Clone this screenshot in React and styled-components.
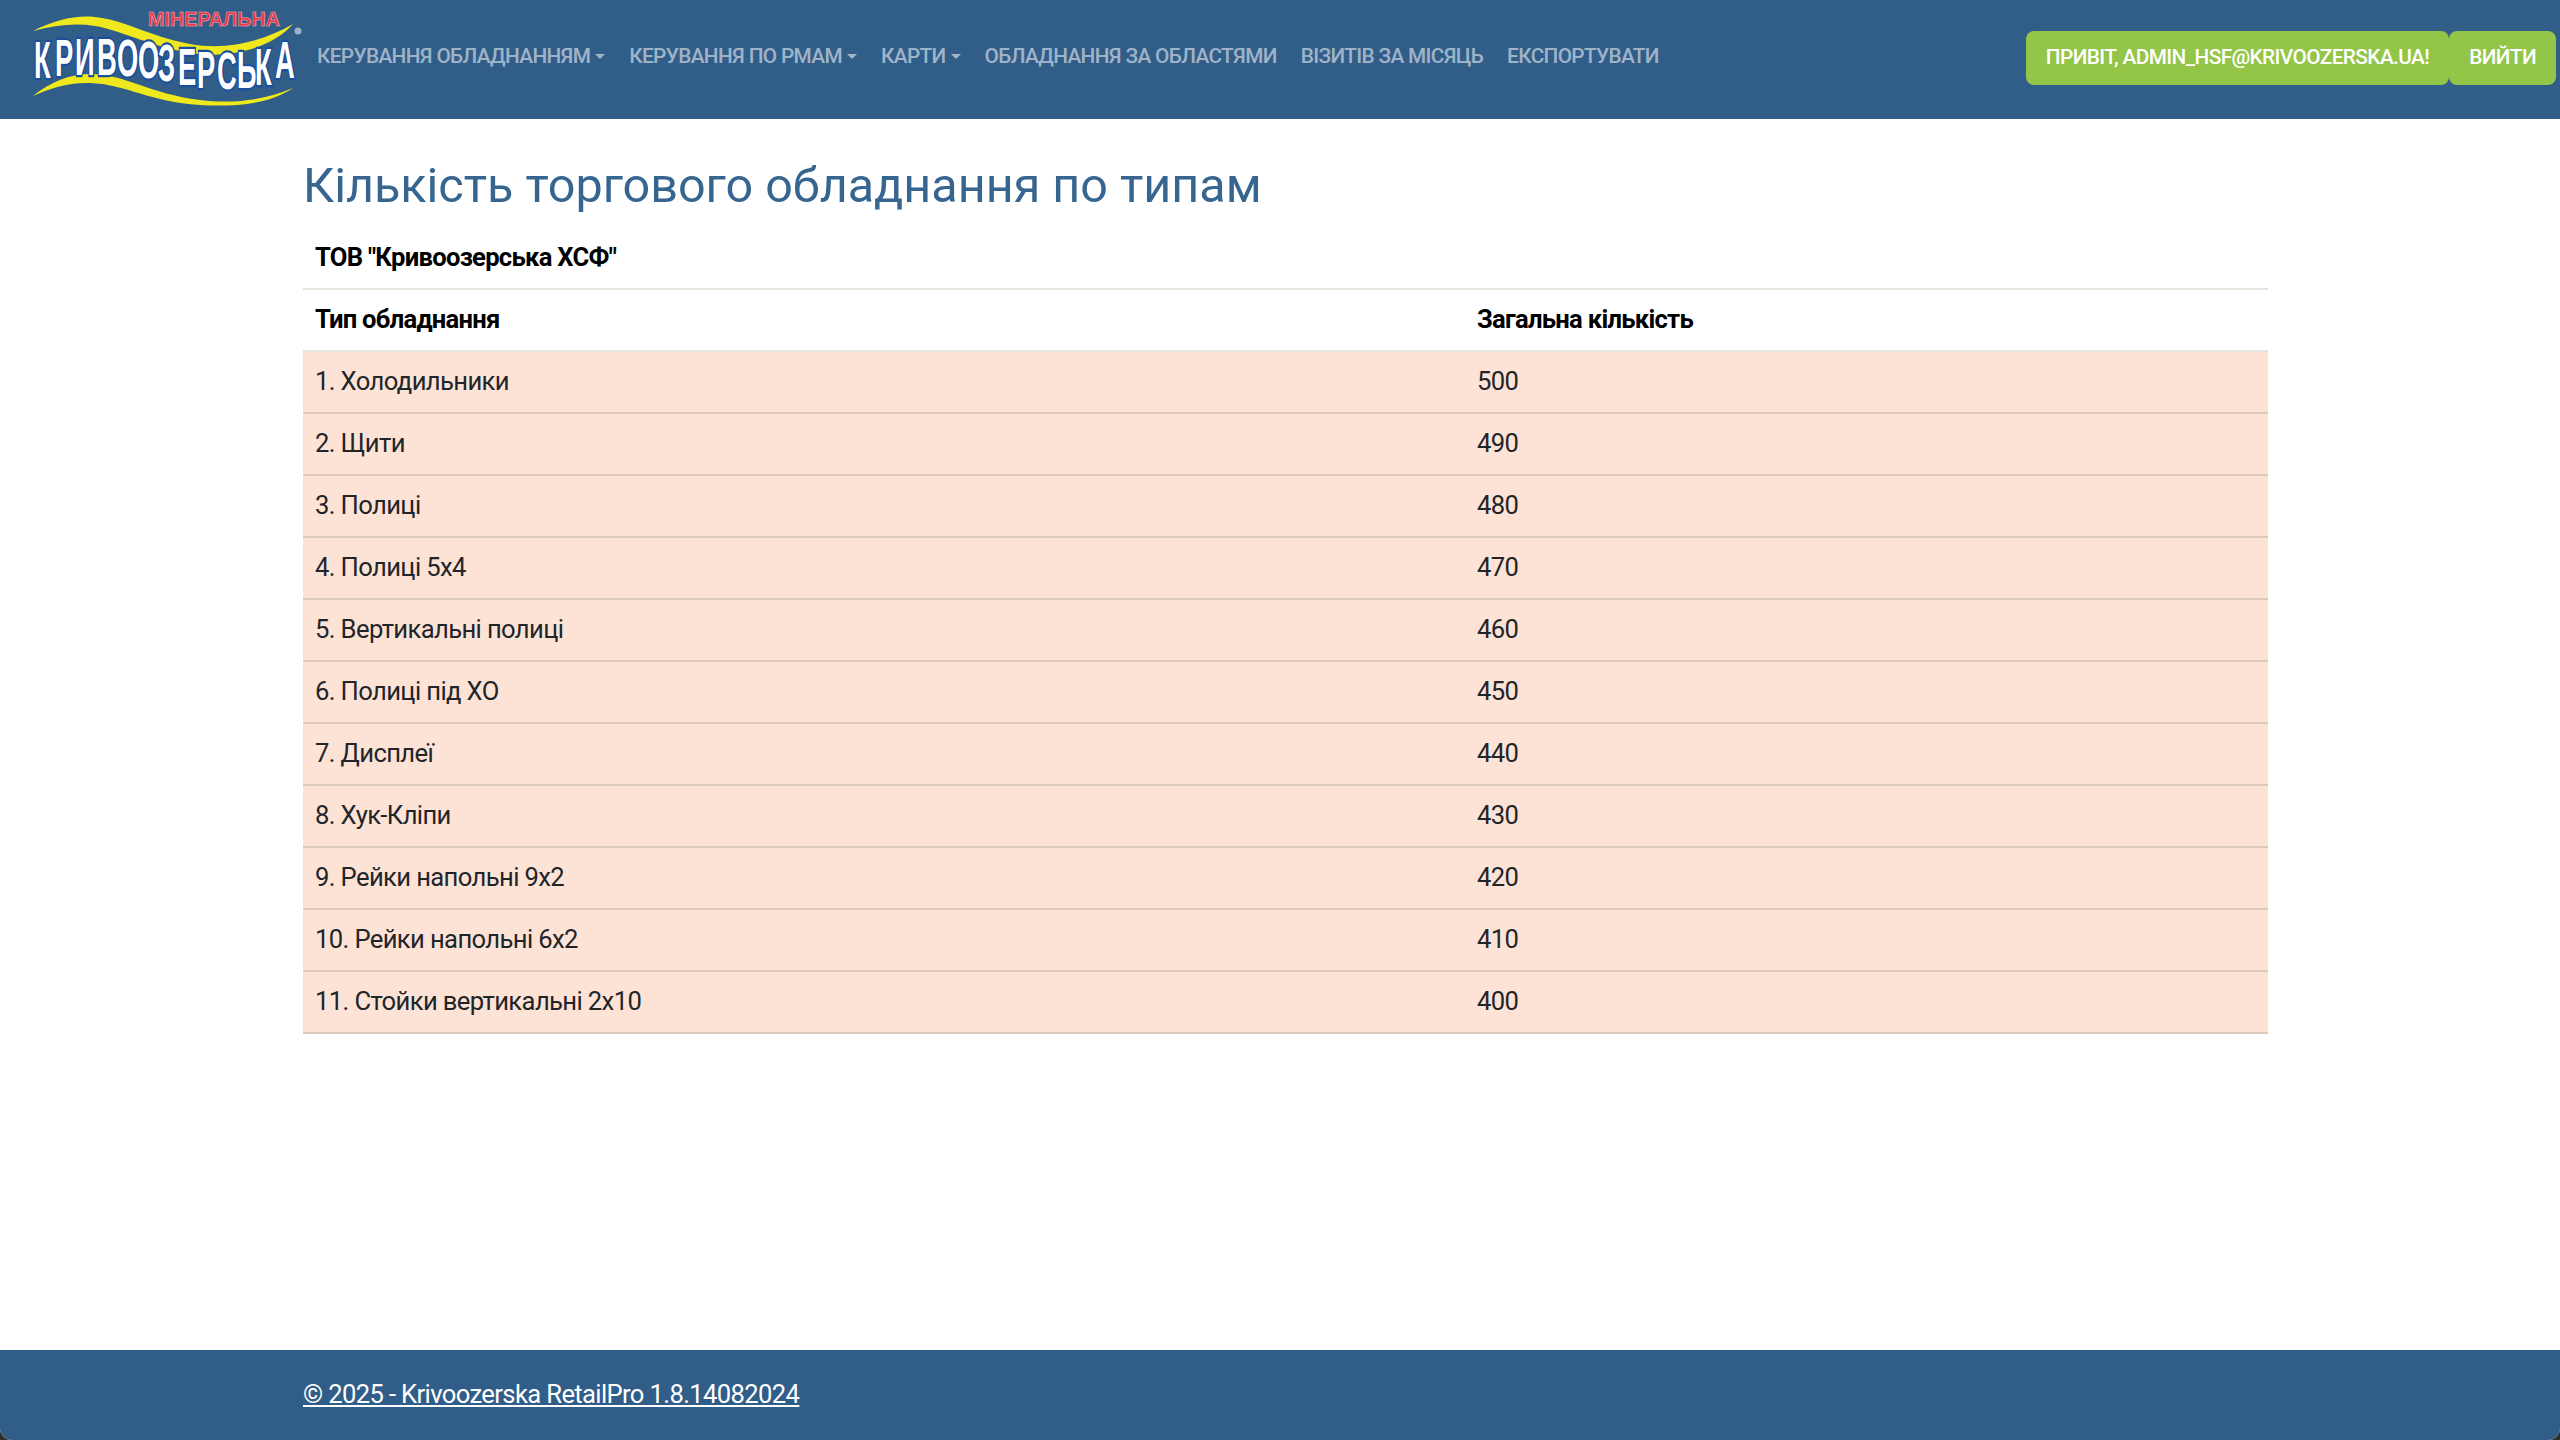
import React from "react";
import styled, { createGlobalStyle } from "styled-components";

const GlobalStyle = createGlobalStyle`
  html, body { margin: 0; padding: 0; background: #2f2f2f; }
  body {
    font-family: Roboto, "Liberation Sans", sans-serif;
    font-size: 25.6px;
    color: #212529;
  }
`;

const Page = styled.div`
  display: flex;
  flex-direction: column;
  height: 1440px;
  background: #fff;
  border-radius: 0 0 12px 12px;
  overflow: hidden;
`;

const NavBar = styled.nav`
  display: flex;
  align-items: center;
  height: 119px;
  flex: none;
  background: #315d89;
  padding-right: 4px;
`;

const LogoBox = styled.svg`
  display: block;
  flex: none;
  width: 305px;
  height: 119px;
`;

const NavList = styled.div`
  display: flex;
  flex: 1;
  align-items: center;
  margin-bottom: 7px;
`;

const NavLink = styled.a`
  display: flex;
  align-items: center;
  padding: 0 12px;
  font-size: 20.8px;
  font-weight: 500;
  letter-spacing: -0.65px;
  color: rgba(255, 255, 255, 0.55);
  white-space: nowrap;
`;

const Caret = styled.span`
  width: 0;
  height: 0;
  margin-left: 5px;
  border-top: 5px solid rgba(255, 255, 255, 0.55);
  border-left: 5px solid transparent;
  border-right: 5px solid transparent;
`;

const UserBox = styled.div`
  display: flex;
  margin-bottom: 3px;
`;

const GreenButton = styled.a`
  display: flex;
  align-items: center;
  height: 54px;
  padding: 0 20px 2px;
  box-sizing: border-box;
  background: #92c548;
  border-radius: 8px;
  font-size: 20.8px;
  font-weight: 500;
  letter-spacing: -0.6px;
  color: #fff;
  white-space: nowrap;
`;

const Main = styled.main`
  flex: 1;
  width: 1965px;
  margin-left: 303px;
  padding-top: 38px;
`;

const Title = styled.h2`
  margin: 0 0 12px;
  font-size: 48.5px;
  font-weight: 400;
  line-height: 58px;
  color: #366590;
`;

const Table = styled.table`
  width: 100%;
  border-collapse: collapse;
  table-layout: fixed;
`;

const HeadCell = styled.th`
  height: 62px;
  padding: 0 12px 2px;
  box-sizing: border-box;
  text-align: left;
  font-size: 25.6px;
  font-weight: 700;
  letter-spacing: -0.73px;
  color: #000;
  border-bottom: 2px solid #e7e3dd;
`;

const Row = styled.tr`
  background: #fde3d6;
`;

const Cell = styled.td`
  height: 62px;
  padding: 0 12px 2px;
  box-sizing: border-box;
  font-size: 25.6px;
  letter-spacing: -0.62px;
  color: #212529;
  border-bottom: 2px solid #dccabf;
`;

const FirstCol = styled.col`
  width: 1162px;
`;

const Footer = styled.footer`
  flex: none;
  height: 90px;
  display: flex;
  align-items: center;
  background: #315d89;
  padding-left: 303px;
  padding-bottom: 2px;
  box-sizing: border-box;
`;

const FooterLink = styled.a`
  font-size: 25.6px;
  letter-spacing: -0.63px;
  color: #fff;
  text-decoration: underline;
`;

const rows = [
  ["1. Холодильники", 500],
  ["2. Щити", 490],
  ["3. Полиці", 480],
  ["4. Полиці 5х4", 470],
  ["5. Вертикальні полиці", 460],
  ["6. Полиці під ХО", 450],
  ["7. Дисплеї", 440],
  ["8. Хук-Кліпи", 430],
  ["9. Рейки напольні 9х2", 420],
  ["10. Рейки напольні 6х2", 410],
  ["11. Стойки вертикальні 2х10", 400],
];

// letter, x, y of baseline
const logoLetters = [
  ["К", 34, 78], ["Р", 55, 76], ["И", 75, 75], ["В", 97, 75], ["О", 117, 76],
  ["О", 138, 78], ["З", 158, 81], ["Е", 178, 85], ["Р", 197, 88], ["С", 217, 89],
  ["Ь", 237, 88], ["К", 255, 85], ["А", 275, 78],
];

function Logo() {
  return (
    <LogoBox viewBox="0 0 305 119">
      <path d="M33 31 C55 20 75 15 95 17 C125 20 145 35 190 44 C230 51 265 40 293 24 C270 50 225 60 185 52 C145 44 120 30 95 26 C75 23 55 25 33 31Z" fill="#efe81c" />
      <path d="M33 96 C50 82 70 74 90 74 C125 74 150 94 200 100 C235 104 265 100 293 88 C270 104 235 107 200 105 C150 102 125 84 90 83 C70 82 50 88 33 96Z" fill="#efe81c" />
      <g fontFamily="'Liberation Sans', sans-serif" fontWeight="700">
        {logoLetters.map(([letter, x, y], i) => (
          <text
            key={i}
            transform={`translate(${x} ${y}) scale(0.76 1.45)`}
            fontSize="36"
            fill="#fff"
            stroke="#1b4f9c"
            strokeWidth="3"
            paintOrder="stroke"
          >
            {letter}
          </text>
        ))}
      </g>
      <text
        x="148"
        y="26"
        fontFamily="'Liberation Sans', sans-serif"
        fontWeight="700"
        fontSize="20"
        textLength="132"
        lengthAdjust="spacingAndGlyphs"
        fill="#e8384a"
        stroke="#f4b4ba"
        strokeWidth="0.5"
      >
        МІНЕРАЛЬНА
      </text>
      <circle cx="298" cy="31" r="3.5" fill="#9fb3c8" />
    </LogoBox>
  );
}

export default function App() {
  return (
    <>
      <GlobalStyle />
      <Page>
        <NavBar>
          <Logo />
          <NavList>
            <NavLink>КЕРУВАННЯ ОБЛАДНАННЯМ<Caret /></NavLink>
            <NavLink>КЕРУВАННЯ ПО РМАМ<Caret /></NavLink>
            <NavLink>КАРТИ<Caret /></NavLink>
            <NavLink>ОБЛАДНАННЯ ЗА ОБЛАСТЯМИ</NavLink>
            <NavLink>ВІЗИТІВ ЗА МІСЯЦЬ</NavLink>
            <NavLink>ЕКСПОРТУВАТИ</NavLink>
          </NavList>
          <UserBox>
            <GreenButton>ПРИВІТ, ADMIN_HSF@KRIVOOZERSKA.UA!</GreenButton>
            <GreenButton>ВИЙТИ</GreenButton>
          </UserBox>
        </NavBar>
        <Main>
          <Title>Кількість торгового обладнання по типам</Title>
          <Table>
            <colgroup>
              <FirstCol />
              <col />
            </colgroup>
            <thead>
              <tr><HeadCell colSpan={2}>ТОВ "Кривоозерська ХСФ"</HeadCell></tr>
              <tr>
                <HeadCell>Тип обладнання</HeadCell>
                <HeadCell>Загальна кількість</HeadCell>
              </tr>
            </thead>
            <tbody>
              {rows.map(([name, total]) => (
                <Row key={name}>
                  <Cell>{name}</Cell>
                  <Cell>{total}</Cell>
                </Row>
              ))}
            </tbody>
          </Table>
        </Main>
        <Footer>
          <FooterLink>© 2025 - Krivoozerska RetailPro 1.8.14082024</FooterLink>
        </Footer>
      </Page>
    </>
  );
}
